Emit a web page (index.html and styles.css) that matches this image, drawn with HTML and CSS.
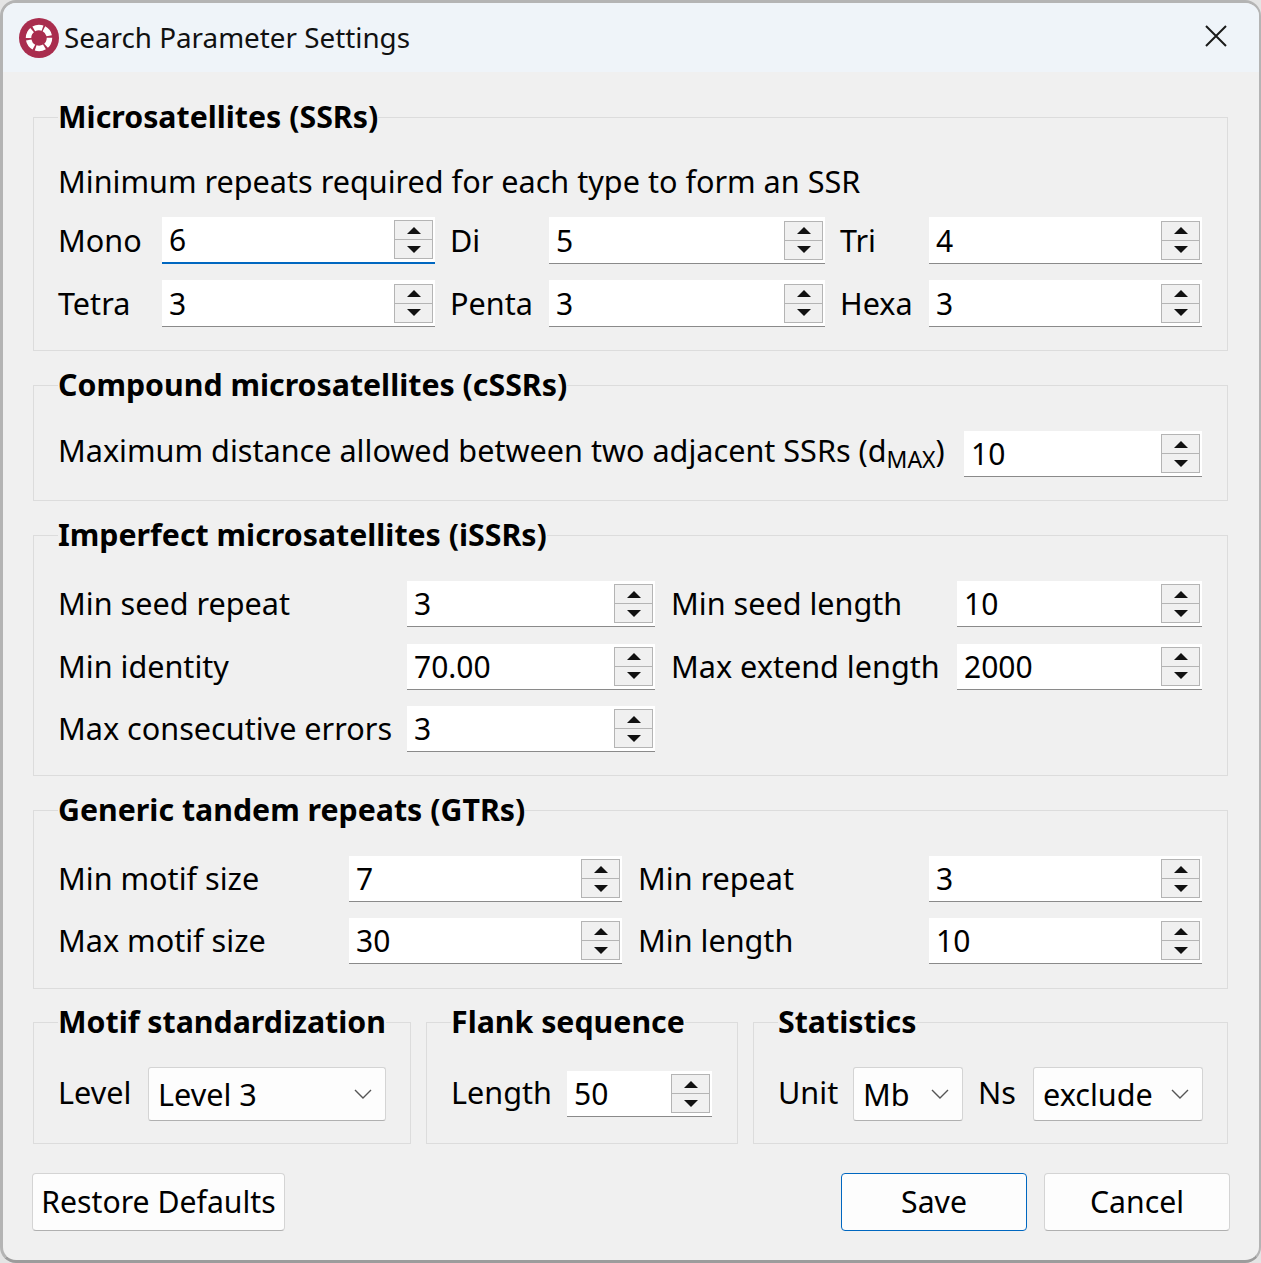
FILE: index.html
```html
<!DOCTYPE html>
<html lang="en">
<head>
    <meta charset="UTF-8">
    <title>Search Parameter Settings</title>
    <link rel="stylesheet" href="styles.css">
</head>
<body>
    <div class="window">
        <div class="titlebar">
            <svg class="logo" width="40" height="40" viewBox="0 0 40 40">
                <circle cx="20" cy="20" r="20" fill="#a92d4e"/>
                <circle cx="20" cy="20" r="10.5" fill="none" stroke="#fff" stroke-width="5.5" stroke-dasharray="9 2" transform="rotate(-62 20 20)"/>
            </svg>
            <span class="title">Search Parameter Settings</span>
            <svg class="close" width="22" height="22" viewBox="0 0 22 22">
                <path d="M1 1 L21 21 M21 1 L1 21" stroke="#1a1a1a" stroke-width="2" fill="none"/>
            </svg>
        </div>

        <div class="content">
            <!-- SSR -->
            <fieldset class="group ssr">
                <legend>Microsatellites (SSRs)</legend>
                <div class="note">Minimum repeats required for each type to form an SSR</div>
                <div class="grid ssr-grid">
                    <label>Mono</label>
                    <div class="spin focused"><span>6</span><div class="arrows"><i class="up"></i><i class="down"></i></div></div>
                    <label>Di</label>
                    <div class="spin"><span>5</span><div class="arrows"><i class="up"></i><i class="down"></i></div></div>
                    <label>Tri</label>
                    <div class="spin"><span>4</span><div class="arrows"><i class="up"></i><i class="down"></i></div></div>
                    <label>Tetra</label>
                    <div class="spin"><span>3</span><div class="arrows"><i class="up"></i><i class="down"></i></div></div>
                    <label>Penta</label>
                    <div class="spin"><span>3</span><div class="arrows"><i class="up"></i><i class="down"></i></div></div>
                    <label>Hexa</label>
                    <div class="spin"><span>3</span><div class="arrows"><i class="up"></i><i class="down"></i></div></div>
                </div>
            </fieldset>

            <!-- cSSR -->
            <fieldset class="group cssr">
                <legend>Compound microsatellites (cSSRs)</legend>
                <div class="grid cssr-grid">
                    <label>Maximum distance allowed between two adjacent SSRs (d<sub>MAX</sub>)</label>
                    <div class="spin"><span>10</span><div class="arrows"><i class="up"></i><i class="down"></i></div></div>
                </div>
            </fieldset>

            <!-- iSSR -->
            <fieldset class="group issr">
                <legend>Imperfect microsatellites (iSSRs)</legend>
                <div class="grid issr-grid">
                    <label>Min seed repeat</label>
                    <div class="spin"><span>3</span><div class="arrows"><i class="up"></i><i class="down"></i></div></div>
                    <label>Min seed length</label>
                    <div class="spin"><span>10</span><div class="arrows"><i class="up"></i><i class="down"></i></div></div>
                    <label>Min identity</label>
                    <div class="spin"><span>70.00</span><div class="arrows"><i class="up"></i><i class="down"></i></div></div>
                    <label>Max extend length</label>
                    <div class="spin"><span>2000</span><div class="arrows"><i class="up"></i><i class="down"></i></div></div>
                    <label>Max consecutive errors</label>
                    <div class="spin"><span>3</span><div class="arrows"><i class="up"></i><i class="down"></i></div></div>
                </div>
            </fieldset>

            <!-- GTR -->
            <fieldset class="group gtr">
                <legend>Generic tandem repeats (GTRs)</legend>
                <div class="grid gtr-grid">
                    <label>Min motif size</label>
                    <div class="spin"><span>7</span><div class="arrows"><i class="up"></i><i class="down"></i></div></div>
                    <label>Min repeat</label>
                    <div class="spin"><span>3</span><div class="arrows"><i class="up"></i><i class="down"></i></div></div>
                    <label>Max motif size</label>
                    <div class="spin"><span>30</span><div class="arrows"><i class="up"></i><i class="down"></i></div></div>
                    <label>Min length</label>
                    <div class="spin"><span>10</span><div class="arrows"><i class="up"></i><i class="down"></i></div></div>
                </div>
            </fieldset>

            <div class="bottom-groups">
                <fieldset class="group small motif">
                    <legend>Motif standardization</legend>
                    <div class="grid motif-grid">
                        <label>Level</label>
                        <div class="select"><span>Level 3</span><svg width="18" height="10" viewBox="0 0 18 10"><path d="M1 1 L9 9 L17 1" fill="none" stroke="#555" stroke-width="1.4"/></svg></div>
                    </div>
                </fieldset>
                <fieldset class="group small flank">
                    <legend>Flank sequence</legend>
                    <div class="grid flank-grid">
                        <label>Length</label>
                        <div class="spin"><span>50</span><div class="arrows"><i class="up"></i><i class="down"></i></div></div>
                    </div>
                </fieldset>
                <fieldset class="group small stats">
                    <legend>Statistics</legend>
                    <div class="grid stats-grid">
                        <label>Unit</label>
                        <div class="select"><span>Mb</span><svg width="18" height="10" viewBox="0 0 18 10"><path d="M1 1 L9 9 L17 1" fill="none" stroke="#555" stroke-width="1.4"/></svg></div>
                        <label>Ns</label>
                        <div class="select"><span>exclude</span><svg width="18" height="10" viewBox="0 0 18 10"><path d="M1 1 L9 9 L17 1" fill="none" stroke="#555" stroke-width="1.4"/></svg></div>
                    </div>
                </fieldset>
            </div>

            <div class="buttons">
                <button class="restore">Restore Defaults</button>
                <button class="primary">Save</button>
                <button>Cancel</button>
            </div>
        </div>
    </div>
</body>
</html>
```
FILE: styles.css
```css
/* Global styles */
html, body {
    margin: 0;
    padding: 0;
    height: 100%;
}
body {
    background: #e4e4e4;
    font-family: 'Noto Sans', sans-serif;
    font-size: 30.6px;
    color: #000;
}
.window {
    box-sizing: border-box;
    width: 1261px;
    height: 1263px;
    background: #f0f0f0;
    border: 3px solid #b4b4b4;
    border-right-width: 2px;
    border-bottom-color: #9c9c9c;
    border-radius: 16px;
    overflow: hidden;
}

/* Title bar */
.titlebar {
    display: flex;
    align-items: center;
    height: 69px;
    padding: 0 32px 0 16px;
    background: #eff4f9;
}
.logo {
    flex: none;
    margin-top: 1px;
}
.title {
    margin-left: 5px;
    margin-bottom: 2px;
    flex: 1;
    color: #111;
    font-size: 27.8px;
}
.close {
    margin-bottom: 4px;
}

/* Groups */
.content {
    padding: 26px 31px 0 30px;
}
.group {
    box-sizing: border-box;
    margin: 0 0 15px;
    padding: 0 26px 0 25px;
    min-width: 0;
    border: 1px solid #dcdcdc;
}
.group legend {
    margin-left: -1px;
    padding: 0;
    font-weight: 700;
    font-size: 30.3px;
    line-height: 38px;
    white-space: nowrap;
}
.ssr { height: 253px; }
.cssr { height: 135px; }
.issr { height: 260px; }
.gtr { height: 198px; margin-bottom: 14px; }

.note {
    line-height: 40px;
    margin-top: 25px;
    margin-left: -1px;
}
.grid {
    display: grid;
    align-items: center;
}
.grid label {
    white-space: nowrap;
    margin-left: -1px;
    margin-top: -2px;
}
.ssr-grid {
    grid-template-columns: 87px 273px 82px 276px 72px 273px;
    column-gap: 16px;
    row-gap: 16px;
    margin-top: 16px;
}
.ssr-grid .spin {
    height: 47px;
}
.cssr-grid {
    grid-template-columns: 888px 238px;
    column-gap: 17px;
    margin-top: 27px;
}
.cssr-grid label {
    margin-top: -8px;
}
.issr-grid {
    grid-template-columns: 331px 248px 268px 245px;
    column-gap: 17px;
    row-gap: 16.5px;
    margin-top: 27px;
}
.gtr-grid {
    grid-template-columns: 273px 273px 273px 273px;
    column-gap: 17px;
    row-gap: 16px;
    margin-top: 27px;
}
.motif-grid {
    grid-template-columns: 73px 238px;
    column-gap: 16px;
    margin-top: 26px;
}
.flank-grid {
    grid-template-columns: 99px 145px;
    column-gap: 16px;
    margin-top: 30px;
}
.stats-grid {
    grid-template-columns: 58px 110px 38px 170px;
    column-gap: 16px;
    margin-top: 26px;
}
.motif-grid label, .flank-grid label, .stats-grid label {
    margin-top: -4px;
}
sub {
    font-size: 23px;
    vertical-align: -6px;
    line-height: 0;
}

/* Spin box */
.spin {
    box-sizing: border-box;
    height: 46px;
    padding-left: 7px;
    background: #fff;
    border-bottom: 1px solid #8a8a8a;
    font-size: 30px;
    display: flex;
    align-items: center;
    justify-content: space-between;
}
.spin.focused {
    border-bottom: 2px solid #0067c0;
}
.arrows {
    box-sizing: border-box;
    display: flex;
    flex-direction: column;
    flex: none;
    width: 39px;
    height: 39px;
    margin-right: 2px;
    border: 1px solid #b4b4b4;
    background: #f0f0f0;
}
.arrows i {
    flex: 1;
    display: flex;
    align-items: center;
    justify-content: center;
}
.arrows i::after {
    content: "";
    border-left: 7px solid transparent;
    border-right: 7px solid transparent;
}
.arrows .up {
    border-bottom: 1px solid #b4b4b4;
}
.arrows .up::after {
    border-bottom: 7px solid #111;
}
.arrows .down::after {
    border-top: 7px solid #111;
}

/* Bottom row */
.bottom-groups {
    display: flex;
    gap: 15px;
}
.small {
    height: 141px;
    margin-bottom: 0;
}
.motif { width: 378px; }
.flank { width: 312px; }
.stats { width: 475px; }
.select {
    box-sizing: border-box;
    display: flex;
    align-items: center;
    justify-content: space-between;
    height: 54px;
    padding: 0 13px 0 9px;
    background: #fdfdfd;
    border: 1px solid #d4d4d4;
    border-bottom-color: #b0b0b0;
    border-radius: 3px;
    font-size: 30.6px;
}

/* Buttons */
.buttons {
    display: flex;
    gap: 17px;
    margin: 29px -2px 0 -1px;
}
button {
    box-sizing: border-box;
    width: 186px;
    height: 58px;
    padding: 0 0 2px;
    font-family: inherit;
    font-size: 30.2px;
    color: #000;
    background: #fdfdfd;
    border: 1px solid #d4d4d4;
    border-bottom-color: #b0b0b0;
    border-radius: 4px;
}
.restore {
    width: 253px;
    margin-right: auto;
}
.primary {
    border: 1px solid #0067c0;
}
```
